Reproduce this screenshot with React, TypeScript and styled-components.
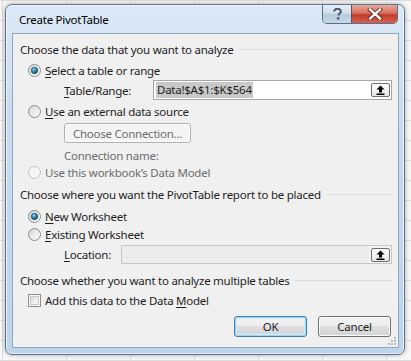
import React from "react";
import styled, { createGlobalStyle } from "styled-components";

const GlobalStyle = createGlobalStyle`
  html, body {
    margin: 0;
    padding: 0;
    width: 411px;
    height: 361px;
    overflow: hidden;
    background-color: #f7f7f7;
    background-image:
      linear-gradient(to right, #dcdcdc 1px, transparent 1px),
      linear-gradient(to bottom, #dcdcdc 1px, transparent 1px);
    background-size: 64px 20px;
    background-position: 2px 0;
  }
  #root {
    font-family: "Noto Sans", "Open Sans", sans-serif;
    font-size: 11.5px;
    letter-spacing: -0.25px;
    color: #1e1e1e;
  }
`;

const Window = styled.div`
  box-sizing: border-box;
  width: 400px;
  height: 351px;
  margin: 4px 0 0 5px;
  display: flex;
  flex-direction: column;
  padding: 0 5px 6px 6px;
  border: 1px solid #5d7591;
  border-radius: 7px;
  background: linear-gradient(to bottom, #dce9f6 0%, #c9dcef 30%, #bed4ea 100%);
  box-shadow: 0 0 4px rgba(0, 0, 0, 0.35), inset 0 0 0 1px rgba(255, 255, 255, 0.6);
`;

const TitleBar = styled.div`
  height: 28px;
  display: flex;
  align-items: center;
  justify-content: space-between;
`;

const Title = styled.span`
  padding-left: 7px;
  padding-top: 1px;
  font-size: 11.5px;
  color: #000;
`;

const Caption = styled.div`
  align-self: flex-start;
  display: flex;
  height: 18px;
  margin-right: 1px;
  border: 1px solid #58708c;
  border-top: none;
  border-radius: 0 0 5px 5px;
  overflow: hidden;
`;

const CaptionButton = styled.div<{ $close?: boolean }>`
  width: ${(p) => (p.$close ? 45 : 28)}px;
  display: flex;
  align-items: center;
  justify-content: center;
  background: ${(p) =>
    p.$close
      ? "linear-gradient(to bottom, #e9a99a 0%, #d7705f 45%, #c4392a 55%, #d26450 100%)"
      : "linear-gradient(to bottom, #e6eef7 0%, #d2deea 45%, #b7c9dc 55%, #c8d8e8 100%)"};
  border-left: ${(p) => (p.$close ? "1px solid #6a5050" : "none")};
`;

const Client = styled.div`
  flex: 1;
  display: flex;
  flex-direction: column;
  border: 1px solid #8fa6bf;
  background: #f0f0f0;
`;

const GroupHeader = styled.div<{ $top: number }>`
  height: 18px;
  margin-top: ${(p) => p.$top}px;
  padding: 0 6px 0 7px;
  display: flex;
  align-items: center;
  gap: 6px;
  white-space: nowrap;
  &::after {
    content: "";
    flex: 1;
    height: 1px;
    background: #d9dde2;
  }
`;

const OptionRow = styled.label<{ $top: number; $disabled?: boolean }>`
  height: 18px;
  margin-top: ${(p) => p.$top}px;
  padding-left: 15px;
  display: flex;
  align-items: center;
  gap: 4px;
  color: ${(p) => (p.$disabled ? "#6d6d6d" : "#1e1e1e")};
`;

const FieldRow = styled.div<{ $top: number; $h: number }>`
  height: ${(p) => p.$h}px;
  margin-top: ${(p) => p.$top}px;
  padding: 0 6px 0 51px;
  display: flex;
  align-items: center;
`;

const FieldLabel = styled.span<{ $w: number; $disabled?: boolean }>`
  width: ${(p) => p.$w}px;
  flex: none;
  color: ${(p) => (p.$disabled ? "#6d6d6d" : "#1e1e1e")};
`;

const RefBox = styled.div<{ $disabled?: boolean }>`
  flex: 1;
  height: 100%;
  box-sizing: border-box;
  display: flex;
  align-items: center;
  padding: 0 1px 0 2px;
  border: 1px solid ${(p) => (p.$disabled ? "#c4c7cb" : "#a3a7ad")};
  background: ${(p) =>
    p.$disabled ? "linear-gradient(to right, #ececec 92%, #f4f4f4 92%)" : "#ffffff"};
`;

const Selected = styled.span`
  background: #c9c9c9;
  color: #1e1e1e;
  padding: 0 1px;
  line-height: 16px;
`;

const Collapse = styled.div`
  margin-left: auto;
  width: 19px;
  height: 14px;
  box-sizing: border-box;
  border: 1px solid #6f6f6f;
  border-radius: 2px;
  background: linear-gradient(to bottom, #ffffff, #e8e8e8);
  display: flex;
  align-items: center;
  justify-content: center;
`;

const PushButton = styled.button<{ $w: number; $default?: boolean; $disabled?: boolean }>`
  width: ${(p) => p.$w}px;
  height: 100%;
  padding: 0;
  font: inherit;
  letter-spacing: inherit;
  color: ${(p) => (p.$disabled ? "#6d6d6d" : "#1e1e1e")};
  border: 1px solid ${(p) => (p.$default ? "#3c7fb1" : p.$disabled ? "#adb2b5" : "#707070")};
  border-radius: 3px;
  background: ${(p) =>
    p.$disabled
      ? "#f4f4f4"
      : "linear-gradient(to bottom, #f4f4f4 0%, #ececec 50%, #dfdfdf 50%, #d3d3d3 100%)"};
  box-shadow: inset 0 0 0 1px ${(p) => (p.$default ? "#9fd5f3" : "#fcfcfc")}
    ${(p) => (p.$default ? ", inset 0 0 0 2px #d3ecfa" : "")};
`;

const ButtonBar = styled.div`
  height: 21px;
  margin-top: 7px;
  padding-right: 7px;
  display: flex;
  justify-content: flex-end;
  gap: 11px;
`;

const Footer = styled.div`
  flex: 1;
  position: relative;
`;

const Grip = styled.svg`
  position: absolute;
  right: 1px;
  bottom: 1px;
`;

const Radio = ({ checked, disabled }: { checked?: boolean; disabled?: boolean }) => (
  <svg width="13" height="13" viewBox="0 0 13 13">
    <defs>
      <linearGradient id="rf" x1="0" y1="0" x2="1" y2="1">
        <stop offset="0" stopColor="#d6d6d6" />
        <stop offset="1" stopColor="#ffffff" />
      </linearGradient>
      <radialGradient id="rd" cx="0.4" cy="0.35" r="0.7">
        <stop offset="0" stopColor="#8fd3f2" />
        <stop offset="0.5" stopColor="#2d7fa8" />
        <stop offset="1" stopColor="#15445f" />
      </radialGradient>
    </defs>
    <circle
      cx="6.5"
      cy="6.5"
      r="6"
      fill={disabled ? "#f4f4f4" : "url(#rf)"}
      stroke={disabled ? "#c3c3c3" : "#8b8b8b"}
    />
    {checked && <circle cx="6.5" cy="6.5" r="3.3" fill="url(#rd)" stroke="#1d4d67" strokeWidth="0.6" />}
  </svg>
);

const CheckBox = () => (
  <svg width="13" height="13" viewBox="0 0 13 13">
    <defs>
      <linearGradient id="cf" x1="0" y1="0" x2="1" y2="1">
        <stop offset="0" stopColor="#dadada" />
        <stop offset="1" stopColor="#fdfdfd" />
      </linearGradient>
    </defs>
    <rect x="0.5" y="0.5" width="12" height="12" fill="#f6f6f6" stroke="#8e8f8f" />
    <rect x="2.5" y="2.5" width="8" height="8" fill="url(#cf)" stroke="#c9c9c9" />
  </svg>
);

const UpArrow = () => (
  <svg width="9" height="10" viewBox="0 0 9 10">
    <path d="M4.5 0.5 L8.5 4.5 L6 4.5 L6 7.5 L3 7.5 L3 4.5 L0.5 4.5 Z" fill="#000" />
    <rect x="0.5" y="8.5" width="8" height="1.5" fill="#000" />
  </svg>
);

const U = styled.span`
  text-decoration: underline;
  text-underline-offset: 2px;
`;

export default function App() {
  return (
    <>
      <GlobalStyle />
      <Window>
        <TitleBar>
          <Title>Create PivotTable</Title>
          <Caption>
            <CaptionButton>
              <svg width="9" height="12" viewBox="0 0 9 12">
                <path
                  d="M1.2 3.6 C1.2 1.4 2.8 0.8 4.5 0.8 C6.3 0.8 7.8 1.6 7.8 3.4 C7.8 5.3 5.4 5.6 5.4 7.6"
                  fill="none"
                  stroke="#4a5a6a"
                  strokeWidth="2"
                />
                <rect x="3.9" y="9.2" width="2.5" height="2.4" fill="#4a5a6a" />
              </svg>
            </CaptionButton>
            <CaptionButton $close>
              <svg width="16" height="12" viewBox="0 0 16 12">
                <path d="M3 1.5 L13 10.5 M13 1.5 L3 10.5" stroke="#5a1e18" strokeWidth="4" strokeLinecap="square" />
                <path d="M3 1.5 L13 10.5 M13 1.5 L3 10.5" stroke="#ffffff" strokeWidth="2.4" strokeLinecap="square" />
              </svg>
            </CaptionButton>
          </Caption>
        </TitleBar>
        <Client>
          <GroupHeader $top={6}>Choose the data that you want to analyze</GroupHeader>
          <OptionRow $top={3}>
            <Radio checked />
            <span>
              <U>S</U>elect a table or range
            </span>
          </OptionRow>
          <FieldRow $top={1} $h={20}>
            <FieldLabel $w={89}>
              <U>T</U>able/Range:
            </FieldLabel>
            <RefBox>
              <Selected>Data!$A$1:$K$564</Selected>
              <Collapse>
                <UpArrow />
              </Collapse>
            </RefBox>
          </FieldRow>
          <OptionRow $top={2}>
            <Radio />
            <span>
              <U>U</U>se an external data source
            </span>
          </OptionRow>
          <FieldRow $top={3} $h={20}>
            <PushButton $w={127} $disabled>
              Choose Connection...
            </PushButton>
          </FieldRow>
          <FieldRow $top={4} $h={16}>
            <FieldLabel $w={120} $disabled>
              Connection name:
            </FieldLabel>
          </FieldRow>
          <OptionRow $top={0} $disabled>
            <Radio disabled />
            <span>Use this workbook’s Data Model</span>
          </OptionRow>
          <GroupHeader $top={4}>Choose where you want the PivotTable report to be placed</GroupHeader>
          <OptionRow $top={4}>
            <Radio checked />
            <span>
              <U>N</U>ew Worksheet
            </span>
          </OptionRow>
          <OptionRow $top={0}>
            <Radio />
            <span>
              <U>E</U>xisting Worksheet
            </span>
          </OptionRow>
          <FieldRow $top={2} $h={19}>
            <FieldLabel $w={57}>
              <U>L</U>ocation:
            </FieldLabel>
            <RefBox $disabled>
              <Collapse>
                <UpArrow />
              </Collapse>
            </RefBox>
          </FieldRow>
          <GroupHeader $top={7}>Choose whether you want to analyze multiple tables</GroupHeader>
          <OptionRow $top={2}>
            <CheckBox />
            <span>
              Add this data to the Data <U>M</U>odel
            </span>
          </OptionRow>
          <ButtonBar>
            <PushButton $w={73} $default>
              OK
            </PushButton>
            <PushButton $w={73}>Cancel</PushButton>
          </ButtonBar>
          <Footer>
            <Grip width="11" height="11" viewBox="0 0 11 11">
              <g fill="#b4b8bd">
                <rect x="8" y="2" width="2" height="2" />
                <rect x="5" y="5" width="2" height="2" />
                <rect x="8" y="5" width="2" height="2" />
                <rect x="2" y="8" width="2" height="2" />
                <rect x="5" y="8" width="2" height="2" />
                <rect x="8" y="8" width="2" height="2" />
              </g>
            </Grip>
          </Footer>
        </Client>
      </Window>
    </>
  );
}
